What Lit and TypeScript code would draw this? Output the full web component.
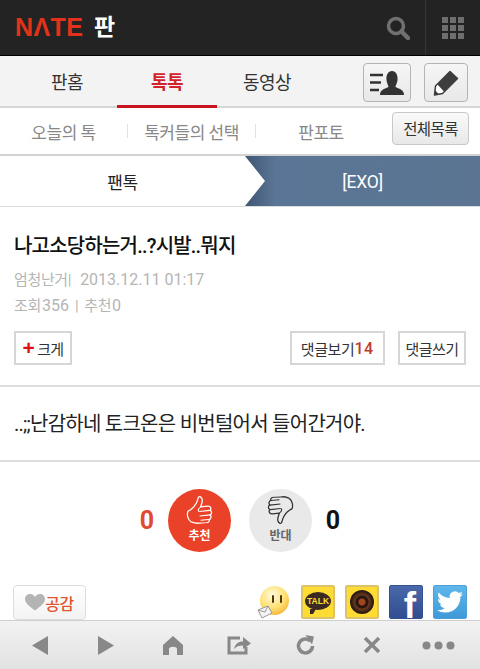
import { LitElement, html, css, svg } from "lit";
import { customElement } from "lit/decorators.js";

@customElement("app-root")
export class AppRoot extends LitElement {
  static styles = css`
    :host { display: block; width: 480px; height: 669px; overflow: hidden; background: #fff;
      font-family: Roboto, "Noto Sans CJK KR", "Liberation Sans", sans-serif; color: #222; }
    * { box-sizing: border-box; }
    .page { display: flex; flex-direction: column; height: 669px; }
    svg { display: block; }

    .top { flex: none; height: 56px; background: #232323; border-bottom: 1px solid #000; display: flex; align-items: center; padding-left: 15px; }
    .logo { font: 700 25px/1 "Liberation Sans", sans-serif; color: #e2321a; letter-spacing: .4px; width: 79px; }
    .pan { font-size: 23px; font-weight: 700; color: #fff; line-height: 1; }
    .top-right { margin-left: auto; display: flex; height: 55px; align-items: center; }
    .search { margin-right: 15px; }
    .grid-cell { width: 55px; height: 55px; border-left: 1px solid #363636; display: flex; align-items: center; justify-content: center; }
    .dots9 { display: grid; grid-template-columns: repeat(3, 6px); gap: 2px; }
    .dots9 i { height: 6px; background: #6e6e6e; }

    .nav { flex: none; height: 52px; background: #f3f3f3; border-bottom: 2px solid #d6d6d6; display: flex; padding-left: 17px; padding-right: 12px; }
    .tab { width: 100px; display: flex; align-items: center; justify-content: center; font-size: 18px; letter-spacing: -.5px; color: #333; }
    .tab.on { color: #d2232a; font-weight: 700; border-bottom: 3px solid #c8141e; margin-bottom: -2px; padding-top: 1px; }
    .nav-btns { margin-left: auto; display: flex; gap: 13px; padding-top: 7px; }
    .nbtn { height: 39px; border: 1px solid #b4b4b4; border-radius: 4px; background: linear-gradient(#f6f6f6, #e8e8e8); display: flex; align-items: center; justify-content: center; }
    .nbtn.person { width: 48px; }
    .nbtn.pencil { width: 44px; }

    .sub { flex: none; height: 48px; border-bottom: 2px solid #d2d2d2; display: flex; align-items: center; padding-right: 11px; color: #888; font-size: 17px; letter-spacing: -.5px; }
    .sub span { text-align: center; }
    .s1 { width: 127px; }
    .s2 { width: 127px; }
    .s3 { width: 130px; }
    .sep { width: 1px; height: 14px; background: #e2e2e2; flex: none; }
    .all { margin-left: auto; width: 77px; height: 33px; border: 1px solid #c8c8c8; border-radius: 4px; background: linear-gradient(#fafafa, #e8e8e8); color: #333; font-size: 15.500px; letter-spacing: -.6px; display: flex; align-items: center; justify-content: center; margin-top: -6px; }

    .crumb { flex: none; height: 51px; border-bottom: 1px solid #ddd; display: flex; font-size: 17px; letter-spacing: -.5px; }
    .c-l { width: 245px; display: flex; align-items: center; justify-content: center; color: #222; }
    .c-r { flex: 1; position: relative; background: linear-gradient(90deg, #3f5672, #5b7596 30px, #5a7492); color: #fff; font-size: 17.500px; letter-spacing: -.3px; display: flex; align-items: center; justify-content: center; padding-top: 2px; }
    .arrow { position: absolute; left: 0; top: 0; width: 20px; height: 50px; }

    .head { flex: none; height: 180px; padding: 25px 14px 0; border-bottom: 2px solid #ddd; }
    h1 { margin: 0; font-size: 20px; font-weight: 500; line-height: 28px; letter-spacing: -.8px; color: #111; }
    .meta { font-size: 15px; line-height: 25px; color: #b5b5b5; letter-spacing: -.35px; display: flex; align-items: baseline; }
    .meta b { font-weight: 400; font-size: 16px; letter-spacing: 0; }
    .m1 { margin-top: 7px; }
    .gap-date { margin-left: 9px; }
    .gap-num { margin-left: 1px; }
    .gap-bar { margin: 0 6px; }
    .btns { display: flex; margin-top: 12px; }
    .btn { height: 34px; border: 2px solid #d6d6d6; background: #fff; font-size: 15px; letter-spacing: -.6px; color: #333; display: flex; align-items: center; justify-content: center; }
    .big { width: 58px; gap: 3px; }
    .plus { color: #e01010; font: 700 21px/1 "Liberation Sans", sans-serif; margin-top: -2px; }
    .view { width: 95px; margin-left: auto; letter-spacing: -.35px; padding-right: 1px; }
    .view em { font-style: normal; color: #c0392b; font-weight: 500; letter-spacing: .3px; font-size: 16px; }
    .write { width: 68px; margin-left: 13px; }

    .body { flex: none; height: 75px; border-bottom: 2px solid #ddd; padding: 0 14px 2px; display: flex; align-items: center; font-size: 20px; letter-spacing: -.75px; color: #222; }

    .vote { flex: none; display: flex; justify-content: center; align-items: center; height: 90px; padding-top: 27px; }
    .count { width: 20px; font: 700 25px/1 Roboto, "Liberation Sans", sans-serif; text-align: center; }
    .count.r { color: #df4a32; margin-right: 11px; }
    .count.k { color: #111; margin-left: 11px; }
    .circle { width: 63px; height: 63px; border-radius: 50%; display: flex; flex-direction: column; align-items: center; padding-top: 7px; font-size: 12px; font-weight: 700; line-height: 14px; gap: 5px; }
    .circle.up { background: #ea4229; color: #fff; }
    .circle.down { background: #e9e9e9; color: #666; margin-left: 18px; }
    .tilt-up { transform: rotate(-6deg); }
    .tilt-down { transform: rotate(174deg); }

    .share { flex: none; margin-top: 33px; display: flex; padding: 0 13px; height: 35px; align-items: flex-start; }
    .like { width: 73px; height: 35px; border: 1px solid #ddd; border-radius: 4px; background: linear-gradient(#fff, #f3f3f3); display: flex; align-items: center; justify-content: center; color: #e2562f; font-size: 16px; font-weight: 500; letter-spacing: -.5px; }
    .icons { margin-left: auto; display: flex; gap: 10px; }
    .sq { width: 34px; height: 34px; border-radius: 2px; display: flex; align-items: center; justify-content: center; }
    .emoji { width: 34px; height: 34px; position: relative; }
    .face { position: absolute; left: 3px; top: 1px; width: 29px; height: 29px; border-radius: 50%; background: radial-gradient(circle at 42% 32%, #fffbe0, #ffe070 50%, #eb9a18 100%); }
    .face i { position: absolute; top: 9px; width: 2px; height: 8px; background: #4d3a10; border-radius: 1px; }
    .eye1 { left: 12px; }
    .eye2 { left: 20px; }
    .note { position: absolute; left: 0; bottom: 0; }
    .kk { background: #ffdc33; border: 2px solid #dcc36a; }
    .bubble { width: 26px; height: 18px; border-radius: 50%; background: #3b2a22; color: #ffdc33; font: 700 8.500px/18px "Liberation Sans", sans-serif; text-align: center; position: relative; margin-top: -3px; }
    .bubble::after { content: ""; position: absolute; left: 5px; bottom: -4px; border-left: 3px solid #3b2a22; border-right: 3px solid transparent; border-top: 5px solid #3b2a22; }
    .lens { width: 24px; height: 24px; border-radius: 50%; background: radial-gradient(circle, #a0481c 0 3px, #2a1510 4px 6px, #6b3a1e 7px, #2c1a12 11px); }
    .fb { background: linear-gradient(#4a69aa, #2f4d90); border: 1px solid #34528f; color: #fff; font: 700 37px/25px "Liberation Sans", sans-serif; align-items: flex-end; justify-content: flex-end; padding-right: 6px; }
    .fb span { display: block; height: 25px; }
    .tw { background: linear-gradient(#5eb6ec, #3f9ad8); border: 1px solid #4d9fd6; }

    .bar { flex: none; margin-top: auto; height: 49px; border-top: 1px solid #cfcfcf; background: linear-gradient(#f2f2f2, #e2e2e2); display: grid; grid-template-columns: repeat(7, 66.500px); padding-left: 6.500px; align-items: center; justify-items: center; }
  `;

  private thumb(stroke: string) {
    return svg`
      <path d="M2 14 C5 13 9 10 11 7 C13 4 13 2 14 1 C16 0 18 3 17 6 C16.600 8 15.500 9.500 15 11 L22 11 C25.500 11 25.500 14.500 23.800 15.500 C26 16.500 25.500 19.500 23.500 20 C25 21.500 24 24.500 22 24.500 C22.500 26.500 21 27.500 19 27.500 L11 27 C8 27 6 26 4 25 C1 23 0 17 2 14 Z" fill="none" stroke="${stroke}" stroke-width="1.300" stroke-linejoin="round"/>
      <path d="M15 11 C13 12 12 14 12.500 15.500 M13 15.500 L23.800 15.500 M13 20 L23.500 20 M13.500 24.300 L22 24.500" fill="none" stroke="${stroke}" stroke-width="1.100"/>`;
  }

  render() {
    return html`
      <div class="page">
        <div class="top">
          <div class="logo">NΛTE</div>
          <div class="pan">판</div>
          <div class="top-right">
            <svg class="search" width="24" height="24" viewBox="0 0 24 24">
              <circle cx="10" cy="10" r="7.500" fill="none" stroke="#707070" stroke-width="3.500"/>
              <path d="M15.500 15.500 L22 22" stroke="#707070" stroke-width="4.500" stroke-linecap="round"/>
            </svg>
            <div class="grid-cell"><div class="dots9">${Array.from({ length: 9 }, () => html`<i></i>`)}</div></div>
          </div>
        </div>

        <div class="nav">
          <div class="tab">판홈</div>
          <div class="tab on">톡톡</div>
          <div class="tab">동영상</div>
          <div class="nav-btns">
            <div class="nbtn person">
              <svg width="36" height="26" viewBox="0 0 36 26">
                <path d="M1 5 H14 M1 12.500 H12 M1 20 H10" stroke="#333" stroke-width="2.500"/>
                <path d="M11 25 C11 20 15 19 19.500 17 C19.500 15.500 18 14 17.500 10 C17 5 19 1 23 1 C27 1 29 5 28.500 10 C28 14 26.500 15.500 26.500 17 C31 19 35 20 35 25 Z" fill="#333"/>
              </svg>
            </div>
            <div class="nbtn pencil">
              <svg width="26" height="26" viewBox="0 0 26 26">
                <path d="M17 1.500 L24.500 8.500 L9.500 23.500 L1.500 25 L2.500 16 Z" fill="#fff" stroke="#3d3d3d" stroke-width="1.500" stroke-linejoin="round"/>
                <path d="M17 1.500 L24.500 8.500 L11 21.500 L4.500 14.500 Z" fill="#3d3d3d"/>
                <path d="M1.500 25 L2 20 L6 24.500 Z" fill="#3d3d3d"/>
              </svg>
            </div>
          </div>
        </div>

        <div class="sub">
          <span class="s1">오늘의 톡</span><i class="sep"></i>
          <span class="s2">톡커들의 선택</span><i class="sep"></i>
          <span class="s3">판포토</span>
          <div class="all">전체목록</div>
        </div>

        <div class="crumb">
          <div class="c-l">팬톡</div>
          <div class="c-r">
            <svg class="arrow" viewBox="0 0 20 50" preserveAspectRatio="none"><path d="M0 0 L20 25 L0 50 Z" fill="#fff"/></svg>
            [EXO]
          </div>
        </div>

        <div class="head">
          <h1>나고소당하는거..?시발..뭐지</h1>
          <div class="meta m1"><span>엄청난거|</span><b class="gap-date">2013.12.11 01:17</b></div>
          <div class="meta"><span>조회</span><b class="gap-num">356</b><span class="gap-bar">|</span><span>추천</span><b class="gap-num">0</b></div>
          <div class="btns">
            <div class="btn big"><span class="plus">+</span>크게</div>
            <div class="btn view">댓글보기<em>14</em></div>
            <div class="btn write">댓글쓰기</div>
          </div>
        </div>

        <div class="body">..;;난감하네 토크온은 비번털어서 들어간거야.</div>

        <div class="vote">
          <div class="count r">0</div>
          <div class="circle up">
            <svg class="tilt-up" width="27" height="28" viewBox="0 0 27 28">${this.thumb("#fff")}</svg>
            <span>추천</span>
          </div>
          <div class="circle down">
            <svg class="tilt-down" width="27" height="28" viewBox="0 0 27 28">${this.thumb("#333")}</svg>
            <span>반대</span>
          </div>
          <div class="count k">0</div>
        </div>

        <div class="share">
          <div class="like">
            <svg width="20" height="17" viewBox="0 0 20 17"><path d="M10 16.500 C4 12 0 9 0 5 C0 2 2.500 0 5 0 C7 0 9 1 10 3 C11 1 13 0 15 0 C17.500 0 20 2 20 5 C20 9 16 12 10 16.500 Z" fill="#b4b4b4"/></svg>
            공감
          </div>
          <div class="icons">
            <div class="emoji">
              <div class="face"><i class="eye1"></i><i class="eye2"></i></div>
              <svg class="note" width="16" height="14" viewBox="0 0 16 14"><path d="M1 5 L11 1 L15 8 L5 13 Z" fill="#f4f4f4" stroke="#999" stroke-width="1"/><path d="M1 5 L8 7 L11 1" fill="none" stroke="#999" stroke-width="1"/></svg>
            </div>
            <div class="sq kk"><div class="bubble">TALK</div></div>
            <div class="sq kk"><div class="lens"></div></div>
            <div class="sq fb"><span>f</span></div>
            <div class="sq tw">
              <svg width="26" height="26" viewBox="0 0 24 24"><path fill="#fff" d="M23.953 4.570a10 10 0 01-2.825.775 4.958 4.958 0 002.163-2.723c-.951.555-2.005.959-3.127 1.184a4.920 4.920 0 00-8.384 4.482C7.690 8.095 4.067 6.130 1.640 3.162a4.822 4.822 0 00-.666 2.475c0 1.710.870 3.213 2.188 4.096a4.904 4.904 0 01-2.228-.616v.060a4.923 4.923 0 003.946 4.827 4.996 4.996 0 01-2.212.085 4.936 4.936 0 004.604 3.417 9.867 9.867 0 01-6.102 2.105c-.390 0-.779-.023-1.170-.067a13.995 13.995 0 007.557 2.209c9.053 0 13.998-7.496 13.998-13.985 0-.210 0-.420-.015-.630A9.935 9.935 0 0024 4.590z"/></svg>
            </div>
          </div>
        </div>

        <div class="bar">
          <svg width="16" height="19" viewBox="0 0 16 19"><path d="M16 0 V19 L0 9.500 Z" fill="#888"/></svg>
          <svg width="16" height="19" viewBox="0 0 16 19"><path d="M0 0 V19 L16 9.500 Z" fill="#888"/></svg>
          <svg width="20" height="19" viewBox="0 0 20 19"><path d="M10 0 L20 9 V19 H14 V13 C14 10 6 10 6 13 V19 H0 V9 Z" fill="#888"/></svg>
          <svg width="24" height="20" viewBox="0 0 24 20"><path d="M13 3 H2 V18 H19 V12" fill="none" stroke="#888" stroke-width="3"/><path d="M7 14 C8 9 11 6.500 16 6.500 V2 L24 8.500 L16 14 V10.500 C12 10.500 9 11.500 7 14 Z" fill="#888"/></svg>
          <svg width="19" height="20" viewBox="0 0 19 20"><path d="M14.500 6 A7 7 0 1 0 16.500 11" fill="none" stroke="#888" stroke-width="3.500"/><path d="M9.500 0 L18 1.500 L16 9.500 Z" fill="#888"/></svg>
          <svg width="18" height="18" viewBox="0 0 18 18"><path d="M2 2 L16 16 M16 2 L2 16" stroke="#888" stroke-width="3.500"/></svg>
          <svg width="33" height="9" viewBox="0 0 33 9"><circle cx="4.500" cy="4.500" r="4" fill="#888"/><circle cx="16.500" cy="4.500" r="4" fill="#888"/><circle cx="28.500" cy="4.500" r="4" fill="#888"/></svg>
        </div>
      </div>
    `;
  }
}
